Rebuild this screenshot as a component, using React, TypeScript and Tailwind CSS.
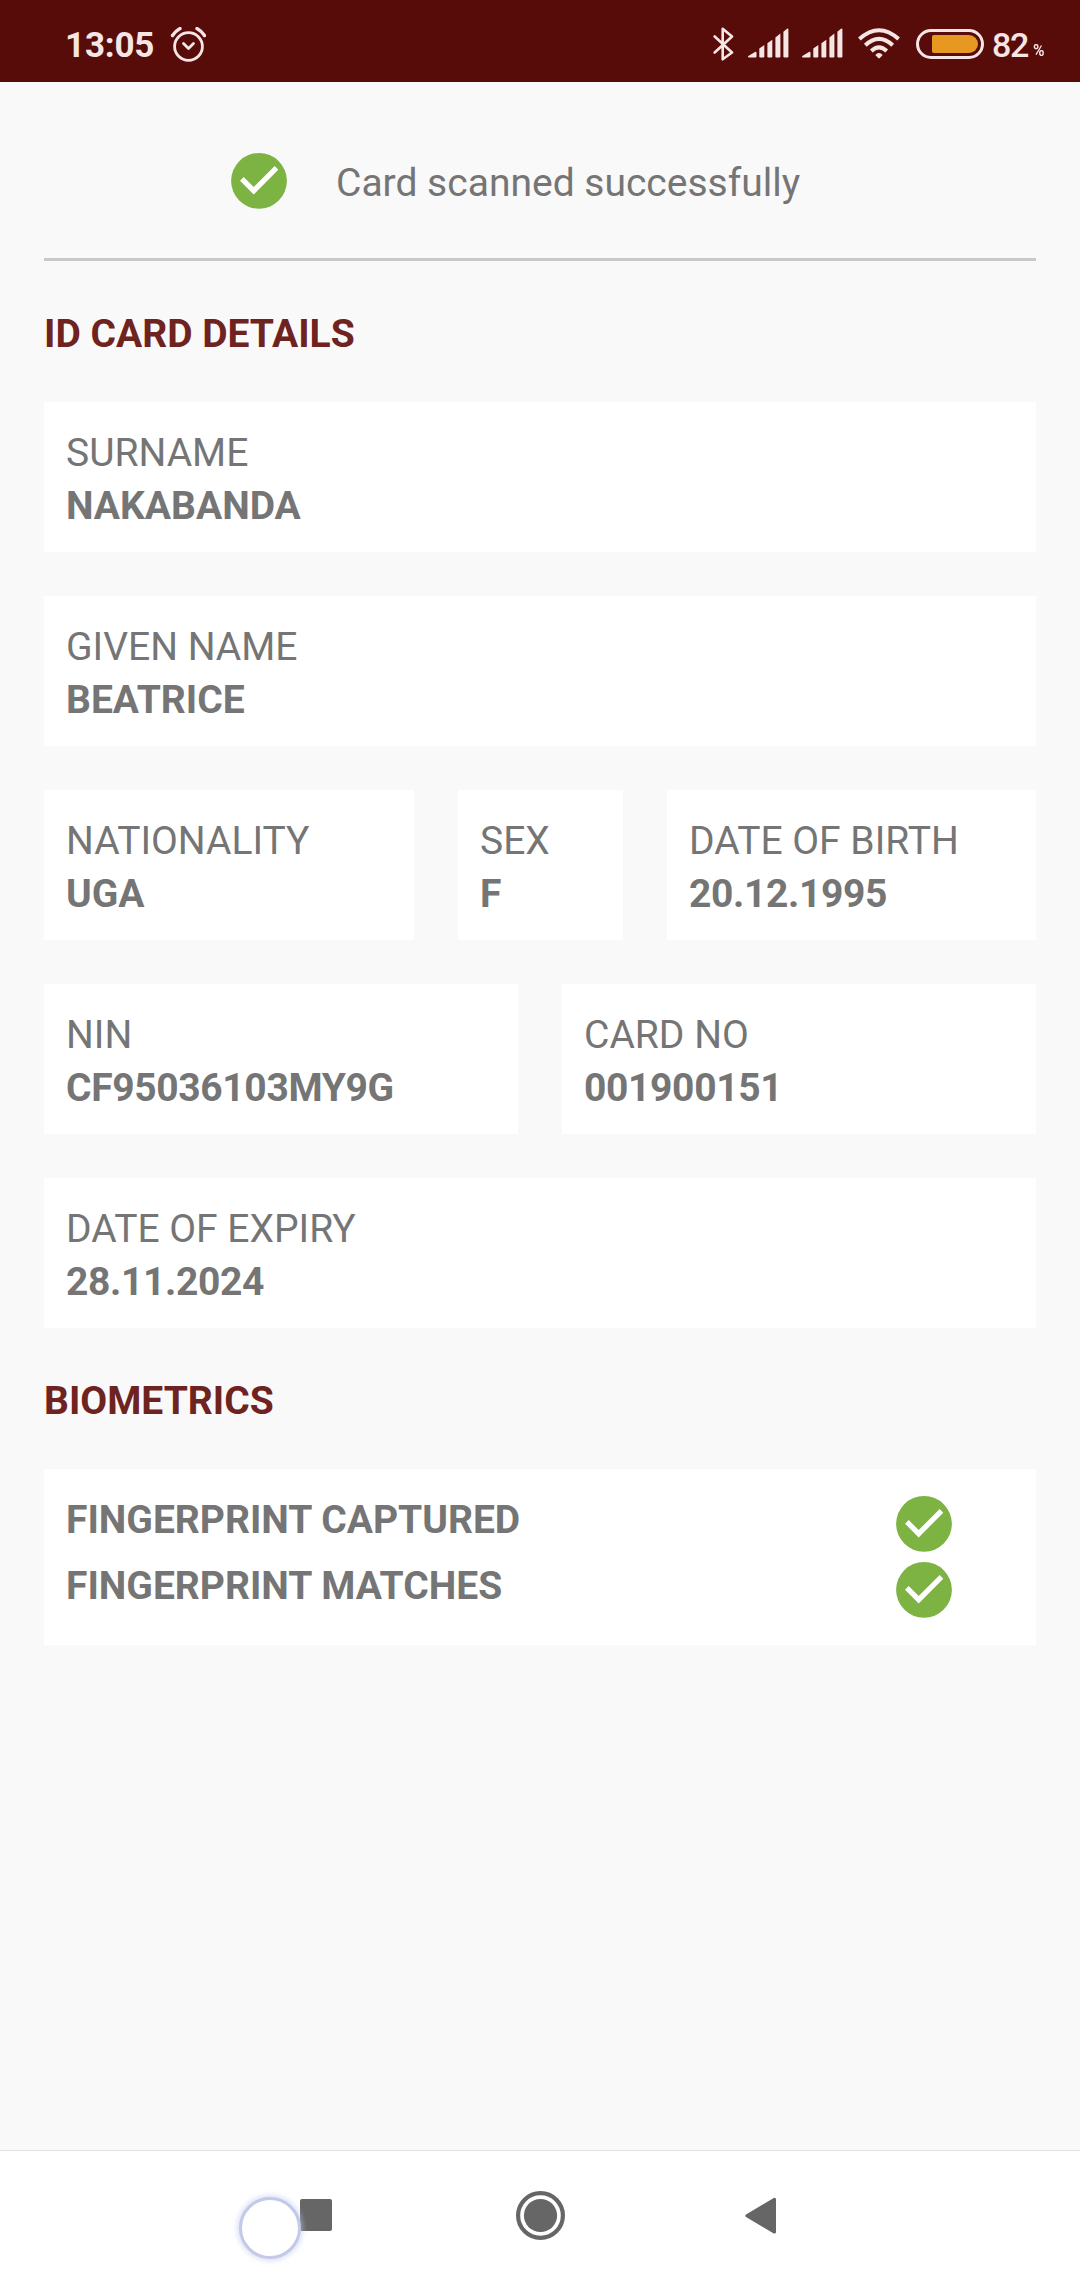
import type { ReactNode } from "react";

const ink = "#f5e6e6";

function CheckIcon() {
  return (
    <svg viewBox="0 0 24 24" className="size-[66px] shrink-0">
      <circle cx="12" cy="11.95" r="10.15" fill="#7cb342" />
      <path d="M5.1 11.9 6.45 10.55 10.07 14.2 17.7 6.55 19 7.9 10.07 16.9z" fill="#fff" />
    </svg>
  );
}

function AlarmIcon() {
  return (
    <svg viewBox="0 0 36 36" className="ml-[15px] mt-[1px] size-[36px]" fill="none" stroke={ink} strokeWidth="2.8" strokeLinecap="round">
      <circle cx="18.5" cy="19.5" r="13.9" />
      <path d="M13.5 16.5l5 5 5-5" strokeLinejoin="round" />
      <path d="M2.5 8.5q3-4.5 7.5-7M34.5 8.5q-3-4.5-7.5-7" strokeWidth="3.4" />
    </svg>
  );
}

function BluetoothIcon() {
  return (
    <svg viewBox="0 0 22 34" className="h-[34px] w-[22px]" fill="none" stroke={ink} strokeWidth="2.6" strokeLinecap="round" strokeLinejoin="round">
      <path d="M1.7 9.5 19 25.5 9.7 32.3V1.7L19 9.5 1.7 25.5" />
    </svg>
  );
}

function SignalIcon() {
  return (
    <svg viewBox="0 0 41 30" className="h-[30px] w-[41px]" fill={ink}>
      <path d="M.3 28 7 24Q8.5 23.3 8.5 25V28.5Q8.5 29.5 7.5 29.5H1Q-.5 29.3.3 28z" />
      <path d="M11.3 20.5 16.3 17.1V28.3Q16.3 29.5 15.2 29.5H12.3Q11.3 29.5 11.3 28.3z" />
      <path d="M19.4 15.2 24.3 11.7V28.3Q24.3 29.5 23.2 29.5H20.4Q19.4 29.5 19.4 28.3z" />
      <path d="M27.4 9.5 32.4 5.6V28.3Q32.4 29.5 31.2 29.5H28.4Q27.4 29.5 27.4 28.3z" />
      <path d="M35.4 3.7 39 .7Q40.4 .2 40.4 1.5V28.3Q40.4 29.5 39.2 29.5H36.5Q35.4 29.5 35.4 28.3z" />
    </svg>
  );
}

function WifiIcon() {
  return (
    <svg viewBox="0 0 42 31" className="h-[31px] w-[42px]" fill="none" stroke={ink} strokeWidth="4">
      <path d="M1.4 11Q21-6.5 40.6 11" />
      <path d="M7.3 17.2Q21 4.5 34.7 17.2" />
      <path d="M13.3 23Q21 15.8 28.7 23" />
      <path d="M17.3 27Q21 23.2 24.7 27L21.8 30Q21 30.8 20.2 30z" fill={ink} stroke="none" />
    </svg>
  );
}

function Battery() {
  return (
    <div className="h-[30px] w-[68px] rounded-full border-3 border-[#f5e6e6] py-[3px] pr-[3px] pl-[13px]">
      <div className="h-[18px] w-full rounded-l-[2px] rounded-r-[10px] bg-[#e69823]" />
    </div>
  );
}

function StatusBar() {
  return (
    <header className="flex h-[82px] items-start justify-between bg-[#580c09] text-[#f5e6e6]">
      <div className="flex pt-[26px] pl-[65px]">
        <span className="mt-[1px] w-[90px] text-[35px]/[38px] font-bold tracking-[-0.2px] whitespace-nowrap">13:05</span>
        <AlarmIcon />
      </div>
      <div className="flex pt-[27px]">
        <BluetoothIcon />
        <div className="ml-[13px] flex gap-[13px] pt-[1px]">
          <SignalIcon />
          <SignalIcon />
        </div>
        <div className="ml-[15px] pt-[1px]"><WifiIcon /></div>
        <div className="ml-[16px] pt-[2px]"><Battery /></div>
        <span className="mt-[1px] ml-[8px] w-[35px] text-[34px]/[35px] font-medium tracking-[-1.2px] whitespace-nowrap">82</span>
        <span className="ml-[6px] w-[47px] pt-[13px] text-[17px]/[20px] font-semibold">
          <span className="inline-block origin-left scale-x-[0.92]">%</span>
        </span>
      </div>
    </header>
  );
}

function Field({ label, value }: { label: string; value: string }) {
  const numeric = /\d/.test(value);
  return (
    <div className="h-[150px] bg-white px-[22px] pt-[25px]">
      <div>{label}</div>
      <div className={numeric ? "font-bold tracking-[-0.35px]" : "font-bold"}>{value}</div>
    </div>
  );
}

function Heading({ children }: { children: ReactNode }) {
  return <h2 className="h-[53px] pt-[3px] font-bold text-[#6f2320]">{children}</h2>;
}

function CheckRow({ label }: { label: string }) {
  return (
    <div className="flex h-[66px] justify-between pr-[57px]">
      <span className="pt-[3px] font-bold">{label}</span>
      <CheckIcon />
    </div>
  );
}

function NavBar() {
  return (
    <nav className="relative flex h-[130px] border-t border-[#e0e0e0] bg-white pl-[300px]">
      <div className="mt-[48px] size-[32px] rounded-[2px] bg-[#666]" />
      <svg viewBox="0 0 49 49" className="mt-[40px] ml-[184px] size-[49px]">
        <circle cx="24.5" cy="24.5" r="22.4" fill="none" stroke="#666" strokeWidth="4.2" />
        <circle cx="24.5" cy="24.5" r="16.6" fill="#666" />
      </svg>
      <svg viewBox="0 0 32 38" className="mt-[46px] ml-[179px] h-[38px] w-[32px]">
        <path d="M2.8 18.7 30.5 2.3V35.1z" fill="#666" stroke="#666" strokeWidth="3" strokeLinejoin="round" />
      </svg>
      <div className="absolute top-[46px] left-[239px] size-[62px] rounded-full border-3 border-[#c3c9e6] bg-white shadow-[0_0_5px_2px_rgba(190,200,238,0.55)] blur-[0.6px]" />
    </nav>
  );
}

export default function App() {
  return (
    <div className="flex h-[2280px] w-[1080px] flex-col bg-[#f9f9f9] font-['Roboto',sans-serif] text-[39px]/[53px] text-[#757575]">
      <StatusBar />
      <main className="flex grow flex-col gap-[44px] px-[44px]">
        <div className="flex h-[179px] gap-[44px] border-b-3 border-[#c9c9c9] pt-[66px] pl-[182px]">
          <CheckIcon />
          <p className="pt-[9px]">Card scanned successfully</p>
        </div>
        <Heading>ID CARD DETAILS</Heading>
        <Field label="SURNAME" value="NAKABANDA" />
        <Field label="GIVEN NAME" value="BEATRICE" />
        <div className="grid grid-cols-[370px_165px_369px] gap-[44px]">
          <Field label="NATIONALITY" value="UGA" />
          <Field label="SEX" value="F" />
          <Field label="DATE OF BIRTH" value="20.12.1995" />
        </div>
        <div className="grid grid-cols-2 gap-[44px]">
          <Field label="NIN" value="CF95036103MY9G" />
          <Field label="CARD NO" value="001900151" />
        </div>
        <Field label="DATE OF EXPIRY" value="28.11.2024" />
        <Heading>BIOMETRICS</Heading>
        <div className="h-[176px] bg-white p-[22px]">
          <CheckRow label="FINGERPRINT CAPTURED" />
          <CheckRow label="FINGERPRINT MATCHES" />
        </div>
      </main>
      <NavBar />
    </div>
  );
}
